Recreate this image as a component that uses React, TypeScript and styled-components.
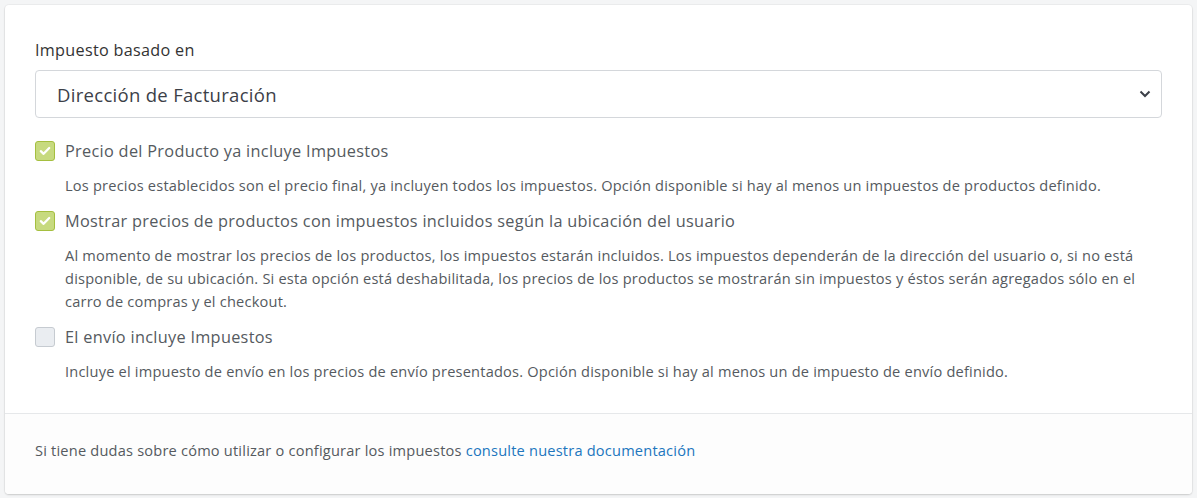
import styled, { createGlobalStyle } from "styled-components";

const GlobalStyle = createGlobalStyle`
  html, body {
    margin: 0;
    background: #f4f5f6;
    font-family: "Open Sans", Lato, sans-serif;
  }
`

const Page = styled.div`
  padding: 5px 5px 4px 5px;
`

const Card = styled.div`
  background: white;
  border-radius: 4px;
  box-shadow: 0 1px 2px rgba(0, 0, 0, 0.15), 0 0 0 1px rgba(0, 0, 0, 0.03);
`

const Body = styled.div`
  padding: 35px 30px 16px 30px;
`

const Label = styled.div`
  font-size: 16.2px;
  letter-spacing: 0.3px;
  line-height: 20px;
  color: #333;
  margin-bottom: 10px;
`

const SelectBox = styled.div`
  height: 46px;
  border: 1px solid #d4d7db;
  border-radius: 4px;
  display: flex;
  align-items: center;
  justify-content: space-between;
  padding: 0 10px 0 21px;
  font-size: 18.5px;
  letter-spacing: 0.3px;
  color: #3c4048;
  margin-bottom: 23px;
`

const Option = styled.div`
  display: flex;
  flex-direction: column;
  margin-bottom: 14px;
`

const OptionHead = styled.div`
  display: flex;
  align-items: center;
  gap: 10px;
  font-size: 16.3px;
  letter-spacing: 0.3px;
  color: #555a60;
  height: 20px;
`

const Box = styled.span<{ $checked?: boolean }>`
  width: 18px;
  height: 18px;
  border-radius: 3px;
  border: 1px solid ${p => (p.$checked ? "#a5bf3f" : "#c6cbd1")};
  background: ${p => (p.$checked ? "#c7da7f" : "#eaedf1")};
  display: flex;
  align-items: center;
  justify-content: center;
  flex-shrink: 0;
`

const Description = styled.div`
  font-size: 14.6px;
  letter-spacing: 0.2px;
  line-height: 23px;
  color: #555a60;
  padding-left: 30px;
  margin-top: 13px;
`

const Footer = styled.div`
  border-top: 1px solid #e6e8ea;
  background: #fdfdfd;
  padding: 25px 30px 32px 30px;
  font-size: 14.6px;
  letter-spacing: 0.2px;
  line-height: 23px;
  color: #555a60;
  border-radius: 0 0 4px 4px;
`

const Link = styled.a`
  color: #2176bd;
  text-decoration: none;
`

const Check = () => (
  <svg width="12" height="10" viewBox="0 0 12 10">
    <path d="M1.8 5.2 L4.6 7.8 L10.2 2" fill="none" stroke="white" strokeWidth="2.3" strokeLinecap="round" strokeLinejoin="round" />
  </svg>
)

const Chevron = () => (
  <svg width="12" height="8" viewBox="0 0 12 8">
    <path d="M1.5 1.5 L6 6 L10.5 1.5" fill="none" stroke="#3c4048" strokeWidth="2" />
  </svg>
)

const options = [
  {
    checked: true,
    title: "Precio del Producto ya incluye Impuestos",
    text: "Los precios establecidos son el precio final, ya incluyen todos los impuestos. Opción disponible si hay al menos un impuestos de productos definido."
  },
  {
    checked: true,
    title: "Mostrar precios de productos con impuestos incluidos según la ubicación del usuario",
    text: "Al momento de mostrar los precios de los productos, los impuestos estarán incluidos. Los impuestos dependerán de la dirección del usuario o, si no está disponible, de su ubicación. Si esta opción está deshabilitada, los precios de los productos se mostrarán sin impuestos y éstos serán agregados sólo en el carro de compras y el checkout."
  },
  {
    checked: false,
    title: "El envío incluye Impuestos",
    text: "Incluye el impuesto de envío en los precios de envío presentados. Opción disponible si hay al menos un de impuesto de envío definido."
  }
]

export default function App() {
  return <Page>
    <GlobalStyle />
    <Card>
      <Body>
        <Label>Impuesto basado en</Label>
        <SelectBox>
          <span>Dirección de Facturación</span>
          <Chevron />
        </SelectBox>
        {options.map(o => (
          <Option key={o.title}>
            <OptionHead>
              <Box $checked={o.checked}>{o.checked && <Check />}</Box>
              <span>{o.title}</span>
            </OptionHead>
            <Description>{o.text}</Description>
          </Option>
        ))}
      </Body>
      <Footer>
        Si tiene dudas sobre cómo utilizar o configurar los impuestos <Link href="#">consulte nuestra documentación</Link>
      </Footer>
    </Card>
  </Page>
}
